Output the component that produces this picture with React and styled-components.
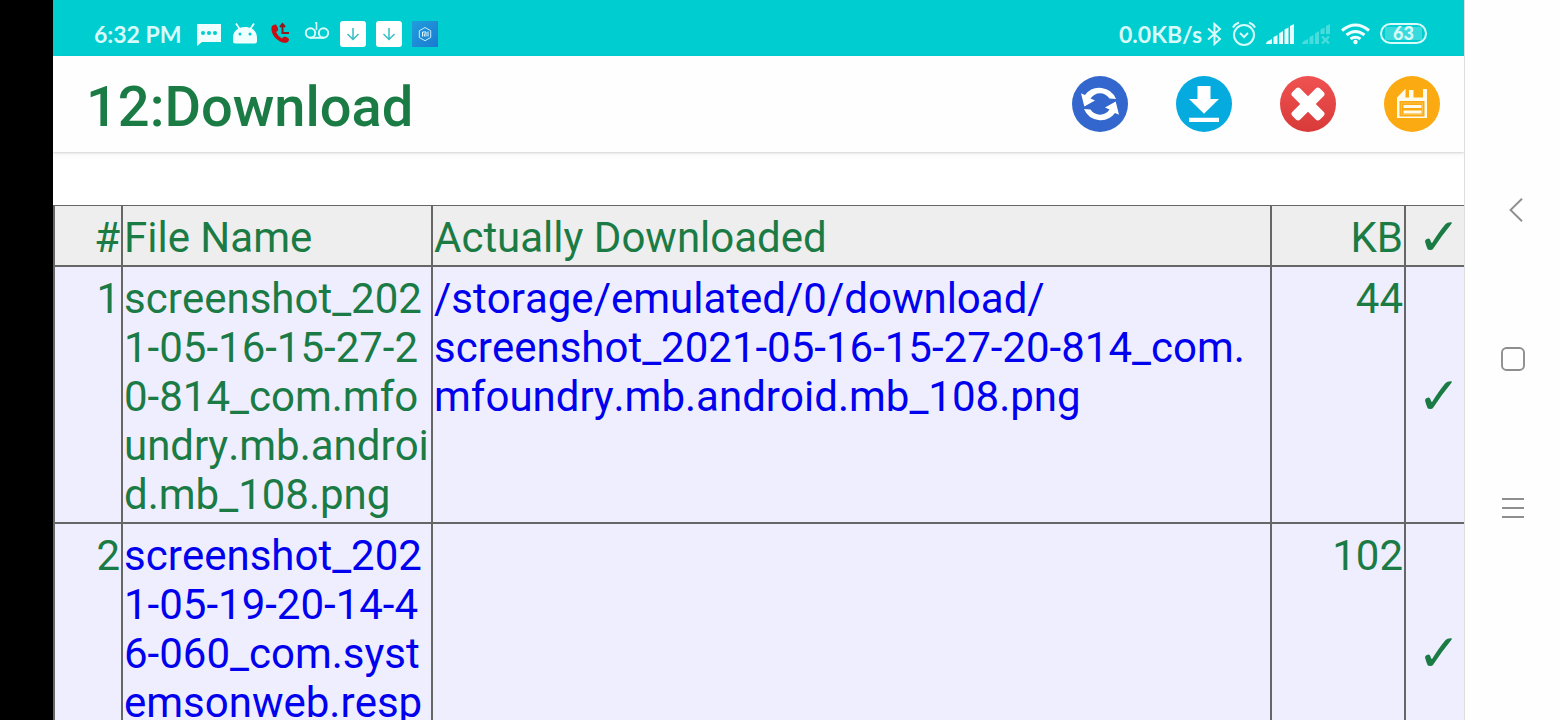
import React from "react";
import styled, { createGlobalStyle } from "styled-components";

const GREEN = "#1b7b45";
const LINE = "#666666";

const GlobalStyle = createGlobalStyle`
  *, *::before, *::after { box-sizing: border-box; }
  body { margin: 0; background: #fefefe; font-family: Roboto, "Liberation Sans", sans-serif; }
`;

const Screen = styled.div`
  display: flex;
  height: 100vh;
  overflow: hidden;
`;

const Bezel = styled.div`
  flex: 0 0 53px;
  background: #000;
`;

const Main = styled.main`
  flex: 1;
  min-width: 0;
  overflow: hidden;
  background: #fff;
`;

const StatusBar = styled.div`
  display: flex;
  align-items: center;
  justify-content: space-between;
  height: 56px;
  padding: 11px 36px 0 41px;
  background: #00cdcf;
  color: #d8fbfb;
  font: 700 23px/44px Lato, sans-serif;
`;

const StatusGroup = styled.div`
  display: flex;
  align-items: center;
  gap: ${(p) => p.$gap}px;
`;

const StatusText = styled.span`
  min-width: ${(p) => p.$width || 0}px;
  margin-right: ${(p) => p.$space || 0}px;
  white-space: nowrap;
`;

const Glyph = styled.svg`
  display: block;
  flex: none;
`;

const TitleBar = styled.header`
  display: flex;
  align-items: center;
  justify-content: space-between;
  height: 96px;
  padding: 0 24px 0 33px;
  background: #fefefe;
  box-shadow: 0 1px 2px rgba(0, 0, 0, 0.15), 0 3px 6px rgba(0, 0, 0, 0.04);
`;

const Title = styled.h1`
  margin: 0;
  padding-top: 6px;
  color: ${GREEN};
  font-size: 56px;
  font-weight: 500;
  line-height: 66px;
`;

const Actions = styled.div`
  display: flex;
  gap: 48px;
`;

const IconButton = styled.button`
  display: block;
  width: ${(p) => p.$size}px;
  height: ${(p) => p.$size}px;
  padding: 0;
  border: 0;
  background: none;
`;

const Table = styled.table`
  width: 100%;
  margin-top: 53px;
  table-layout: fixed;
  border-spacing: 0;
  border-top: 1px solid ${LINE};
  border-left: 2px solid ${LINE};
  color: ${GREEN};
  font-size: 42px;
  font-kerning: none;
  line-height: 49px;
`;

const Col = styled.col`
  width: ${(p) => (p.$width ? `${p.$width}px` : "auto")};
`;

const HeadCell = styled.th`
  padding: 7px 1px 3px;
  border-right: ${(p) => (p.$last ? 0 : 2)}px solid ${LINE};
  border-bottom: 2px solid ${LINE};
  background: #eee;
  font-weight: 400;
  text-align: ${(p) => p.$align || "left"};
`;

const Row = styled.tr`
  height: 257px;
`;

const Cell = styled.td`
  padding: 7px 1px 3px;
  border-right: ${(p) => (p.$last ? 0 : 2)}px solid ${LINE};
  border-bottom: 2px solid ${LINE};
  background: #eeeeff;
  text-align: ${(p) => p.$align || "left"};
  vertical-align: ${(p) => (p.$last ? "middle" : "top")};
  word-break: ${(p) => (p.$breakAll ? "break-all" : "normal")};
`;

const Check = styled.span`
  display: block;
  padding-left: 8px;
  font-family: "DejaVu Sans", sans-serif;
  font-size: 52px;
`;

const FileLink = styled.a`
  color: #0000ee;
  text-decoration: none;
`;

const NavBar = styled.nav`
  display: flex;
  flex: 0 0 96px;
  flex-direction: column;
  align-items: center;
  justify-content: center;
  gap: 125px;
  padding-bottom: 2px;
  border-left: 1px solid #dedede;
  background: #fefefe;
`;

const MessageIcon = () => (
  <Glyph width="26" height="26" viewBox="0 0 26 26">
    <path d="M1 3h24v18H6l-5 4z" fill="#effefe" />
    <g fill="#00cdcf"><circle cx="7" cy="12" r="2" /><circle cx="13" cy="12" r="2" /><circle cx="19" cy="12" r="2" /></g>
  </Glyph>
);

const AndroidIcon = () => (
  <Glyph width="26" height="26" viewBox="0 0 26 26">
    <path d="M1 22v-5C1 10 6 6 13 6S25 10 25 17v3q0 2.500-2.500 2.500h-19Q1 22.500 1 20z" fill="#effefe" />
    <path d="M4 2.500l4 6M22 2.500l-4 6" stroke="#effefe" strokeWidth="1.800" />
    <g fill="#00cdcf"><circle cx="8" cy="13" r="1.500" /><circle cx="18" cy="13" r="1.500" /></g>
  </Glyph>
);

const CallIcon = () => (
  <Glyph width="26" height="26" viewBox="0 0 26 26">
    <path d="M4 5q2-2 4-1.500 1.500 2 2.300 5-.5 1.500-2.300 2.500 2 4.500 6 6.500 1.500-2 3-2 2.500.8 4 2.500.5 1.500-2 3.500-3 1-7-1Q5 16.500 3.500 9.500 3 6.500 4 5z" fill="#c90d12" />
    <path d="M14.500 4v8H21M12 6l2.500-3L17 6" fill="none" stroke="#8f1a20" strokeWidth="2" />
  </Glyph>
);

const VoicemailIcon = () => (
  <Glyph width="26" height="26" viewBox="0 0 26 26" fill="none" stroke="#d8fbfb">
    <circle cx="6.500" cy="12" r="4.700" strokeWidth="2" />
    <circle cx="19.500" cy="12" r="4.700" strokeWidth="2" />
    <path d="M6 16.800h14" strokeWidth="2" />
    <path d="M11 1.800h1.500V9" strokeWidth="1.600" />
  </Glyph>
);

const ArrowBoxIcon = () => (
  <Glyph width="26" height="26" viewBox="0 0 26 26">
    <rect width="26" height="26" rx="3" fill="#fff" />
    <path d="M13 7v11M7.500 13l5.500 5.500 5.500-5.500" fill="none" stroke="#35bfc4" strokeWidth="1.500" />
  </Glyph>
);

const MiIcon = () => (
  <Glyph width="26" height="26" viewBox="0 0 26 26">
    <defs>
      <linearGradient id="mi" x1="0" y1="0" x2="1" y2="1"><stop stopColor="#219ddc" /><stop offset="1" stopColor="#1a79d1" /></linearGradient>
    </defs>
    <rect width="26" height="26" fill="url(#mi)" />
    <path d="M13 6.500l5.700 3.200v6.800L13 19.700l-5.700-3.200V9.700z" fill="none" stroke="#c8efff" />
    <path d="M10.500 15.500v-4.500h3.500v4.500M12.300 12.500v3M16 10.500v5" fill="none" stroke="#e8faff" strokeWidth="1" />
  </Glyph>
);

const BluetoothIcon = () => (
  <Glyph width="16" height="24" viewBox="0 0 16 24">
    <path d="M2 6.500l12 10.500L8.500 22V2L14 7 2 17.500" fill="none" stroke="#d8fbfb" strokeWidth="2" />
  </Glyph>
);

const AlarmIcon = () => (
  <Glyph width="28" height="26" viewBox="0 0 28 26" fill="none" stroke="#d8fbfb">
    <circle cx="14" cy="14" r="10" strokeWidth="2" />
    <path d="M3 6.500q2-3.500 6-5M25 6.500q-2-3.500-6-5" strokeWidth="2.200" />
    <path d="M10 12l4 4 4-4" strokeWidth="2" />
  </Glyph>
);

const SignalIcon = ({ missing }) => (
  <Glyph width="28" height="22" viewBox="0 0 28 22" opacity={missing ? 0.32 : 1}>
    <path d="M0 21q0-2 2-3l4-2v5zM7.500 21v-7l4-2v9z" fill="#e4fdfd" />
    <path d="M13 21V10.500L17 8v13z" fill="#e4fdfd" />
    {missing ? (
      <path d="M18.500 11V6.500l4-2V11zM24 11V3l4-2v10z" fill="#e4fdfd" />
    ) : (
      <path d="M18.500 21V6.500l4-2V21zM24 21V3l4-2v20z" fill="#e4fdfd" />
    )}
    {missing && <path d="M20 13.500l7 7M27 13.500l-7 7" stroke="#e4fdfd" strokeWidth="2.400" />}
  </Glyph>
);

const WifiIcon = () => (
  <Glyph width="34" height="22" viewBox="0 0 34 22" fill="none" stroke="#effefe" strokeWidth="3">
    <path d="M4 7.500q13.500-11 27 0M8.500 12q9-7 18 0M12.500 16q5-3.500 10 0" />
    <circle cx="17.500" cy="19" r="2.200" fill="#effefe" stroke="none" />
  </Glyph>
);

const Battery = styled.div`
  width: 47px;
  height: 21px;
  margin-right: 1px;
  border: 2px solid #d8fbfb;
  border-radius: 11px;
  background: linear-gradient(90deg, #38dadb, #38dadb) 3px 2px / 37px 13px no-repeat;
  font: 900 18px/17px Lato, sans-serif;
  text-align: center;
`;

const RefreshIcon = () => {
  const arc = "M44 22.900A18 18 0 0 0 13 19L9 17.200 12.300 30.500 23 24.500 18.500 22.500A11.300 11.300 0 0 1 37.500 22.500Z";
  return (
    <Glyph width="56" height="56" viewBox="0 0 56 56">
      <circle cx="28" cy="28" r="28" fill="#3367cd" />
      <path d={arc} fill="#fff" />
      <path d={arc} fill="#fff" transform="rotate(180 28 28)" />
    </Glyph>
  );
};

const DownloadIcon = () => (
  <Glyph width="56" height="56" viewBox="0 0 56 56">
    <circle cx="28" cy="28" r="28" fill="#05aadf" />
    <path d="M21.500 10h13v13h8.500L28 37.800 13 23h8.500zM13 41.800h30v4.200H13z" fill="#fff" />
  </Glyph>
);

const CancelIcon = () => (
  <Glyph width="56" height="56" viewBox="0 0 56 56">
    <defs>
      <linearGradient id="red" x1="0" y1="0" x2="0" y2="1"><stop stopColor="#f05252" /><stop offset="1" stopColor="#d83a3a" /></linearGradient>
    </defs>
    <circle cx="28" cy="28" r="28" fill="url(#red)" />
    <g fill="#fff">
      <rect x="8.500" y="22.500" width="39" height="11" rx="3" transform="rotate(45 28 28)" />
      <rect x="8.500" y="22.500" width="39" height="11" rx="3" transform="rotate(-45 28 28)" />
    </g>
  </Glyph>
);

const SaveIcon = () => (
  <Glyph width="56" height="56" viewBox="0 0 56 56">
    <circle cx="28" cy="28" r="28" fill="#fcaa12" />
    <path d="M13 21.500l8.500-8.700V21.500h3.500V14h4.500v7.500H39V13h4v29H13z" fill="#fffbea" />
    <path d="M15.500 25h25v15.500h-25z" fill="#fcaa12" />
    <path d="M17.500 27h21v11.500h-21z" fill="none" stroke="#fdc14e" strokeWidth="1" />
    <path d="M19.500 29h18v3h-18zM19.500 34.500h18v3h-18z" fill="#fffbea" />
  </Glyph>
);

const BackIcon = () => (
  <Glyph width="24" height="24" viewBox="0 0 24 24">
    <path d="M21 .7L9.500 12 21 23.300" fill="none" stroke="#8e8e8e" strokeWidth="1.900" />
  </Glyph>
);

const HomeIcon = () => (
  <Glyph width="24" height="24" viewBox="0 0 24 24">
    <rect x="1" y="1" width="22" height="22" rx="4.500" fill="none" stroke="#8e8e8e" strokeWidth="1.900" />
  </Glyph>
);

const MenuIcon = () => (
  <Glyph width="24" height="24" viewBox="0 0 24 24">
    <path d="M1 3h22M1 12h22M1 21h22" stroke="#8e8e8e" strokeWidth="1.800" />
  </Glyph>
);

const actions = [
  { label: "Refresh", Icon: RefreshIcon },
  { label: "Download", Icon: DownloadIcon },
  { label: "Cancel", Icon: CancelIcon },
  { label: "Save", Icon: SaveIcon },
];

const navItems = [
  { label: "Back", Icon: BackIcon },
  { label: "Home", Icon: HomeIcon },
  { label: "Recent apps", Icon: MenuIcon },
];

const files = [
  {
    name: "screenshot_2021-05-16-15-27-20-814_com.mfoundry.mb.android.mb_108.png",
    folder: "/storage/emulated/0/download/",
    saved: ["screenshot_2021-05-16-15-27-20-814_com.", "mfoundry.mb.android.mb_108.png"],
    size: 44,
  },
  { name: "screenshot_2021-05-19-20-14-46-060_com.systemsonweb.resp", size: 102 },
];

export default function App() {
  return (
    <>
      <GlobalStyle />
      <Screen>
        <Bezel />
        <Main>
          <StatusBar>
            <StatusGroup $gap={10}>
              <StatusText $width={92}>6:32 PM</StatusText>
              <MessageIcon />
              <AndroidIcon />
              <CallIcon />
              <VoicemailIcon />
              <ArrowBoxIcon />
              <ArrowBoxIcon />
              <MiIcon />
            </StatusGroup>
            <StatusGroup $gap={8}>
              <StatusText $space={-4}>0.0KB/s</StatusText>
              <BluetoothIcon />
              <AlarmIcon />
              <SignalIcon />
              <SignalIcon missing />
              <WifiIcon />
              <Battery>63</Battery>
            </StatusGroup>
          </StatusBar>
          <TitleBar>
            <Title>12:Download</Title>
            <Actions>
              {actions.map(({ label, Icon }) => (
                <IconButton key={label} $size={56} type="button" aria-label={label}>
                  <Icon />
                </IconButton>
              ))}
            </Actions>
          </TitleBar>
          <Table>
            <colgroup>
              <Col $width={68} />
              <Col $width={310} />
              <Col />
              <Col $width={134} />
              <Col $width={58} />
            </colgroup>
            <thead>
              <tr>
                <HeadCell $align="right">#</HeadCell>
                <HeadCell>File Name</HeadCell>
                <HeadCell>Actually Downloaded</HeadCell>
                <HeadCell $align="right">KB</HeadCell>
                <HeadCell $align="center" $last><Check>✓</Check></HeadCell>
              </tr>
            </thead>
            <tbody>
              {files.map((file, i) => (
                <Row key={file.name}>
                  <Cell $align="right">{i + 1}</Cell>
                  <Cell $breakAll>
                    {file.saved ? file.name : <FileLink href="#file">{file.name}</FileLink>}
                  </Cell>
                  <Cell>
                    {file.saved && (
                      <FileLink href="#saved">
                        {file.folder}
                        <br />
                        {file.saved[0]}
                        <wbr />
                        {file.saved[1]}
                      </FileLink>
                    )}
                  </Cell>
                  <Cell $align="right">{file.size}</Cell>
                  <Cell $align="center" $last><Check>✓</Check></Cell>
                </Row>
              ))}
            </tbody>
          </Table>
        </Main>
        <NavBar>
          {navItems.map(({ label, Icon }) => (
            <IconButton key={label} $size={24} type="button" aria-label={label}>
              <Icon />
            </IconButton>
          ))}
        </NavBar>
      </Screen>
    </>
  );
}
